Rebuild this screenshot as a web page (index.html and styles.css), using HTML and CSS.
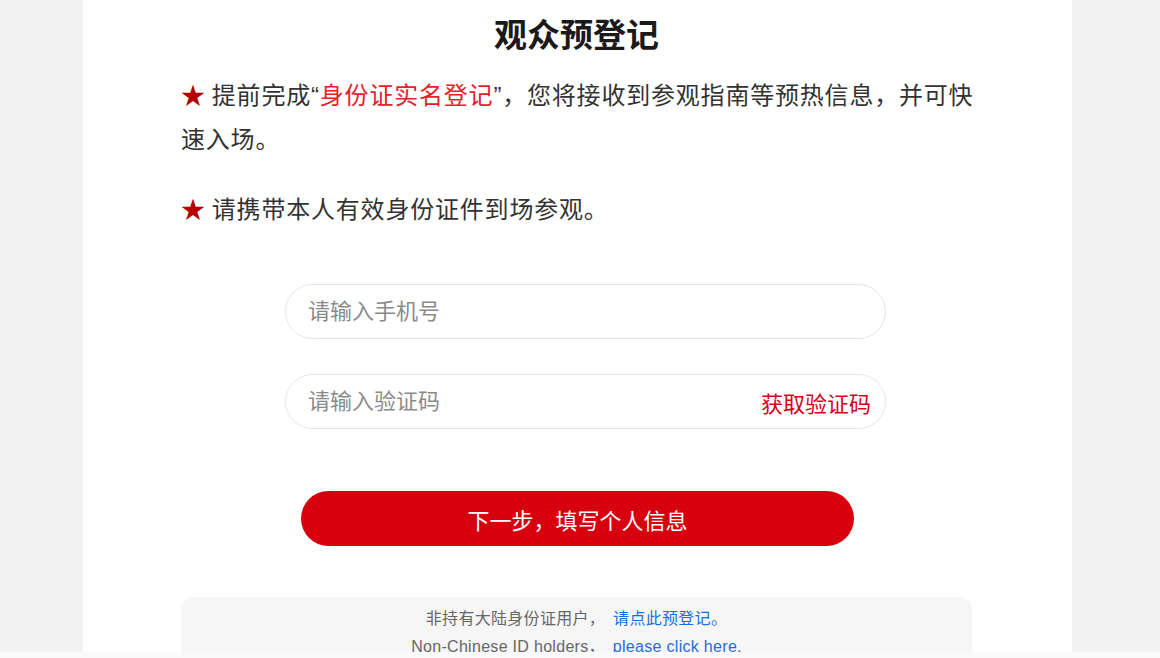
FILE: index.html
```html
<!DOCTYPE html>
<html>
<head>
    <title> 观众预登记 </title>
    <link rel="stylesheet" href="styles.css">
</head>
<body>
    <div class="page">
        <h2>观众预登记</h2>
        <p class="tip"><span class="star">★</span>提前完成“<span class="hl">身份证实名登记</span>”，您将接收到参观指南等预热信息，并可快速入场。</p>
        <p class="tip"><span class="star">★</span>请携带本人有效身份证件到场参观。</p>

        <form class="form">
            <div class="field">
                <input type="text" placeholder="请输入手机号">
            </div>
            <div class="field">
                <input type="text" placeholder="请输入验证码">
                <span class="get-code">获取验证码</span>
            </div>
            <button type="button" class="next">下一步，填写个人信息</button>
        </form>

        <div class="notice">
            <div>非持有大陆身份证用户，<a href="#">请点此预登记。</a></div>
            <div>Non-Chinese ID holders，<a href="#">please click here.</a></div>
        </div>
    </div>
    <div class="bottom-bar"></div>
</body>
</html>
```

FILE: styles.css
```css
body {
    font-family: "Liberation Sans", "Noto Sans CJK SC", sans-serif;
    background-color: #f2f2f2;
    margin: 0;
    height: 658px;
    overflow: hidden;
    display: flex;
    flex-direction: column;
}

.page {
    width: 989px;
    height: 652px;
    margin-left: 83px;
    background-color: #fff;
    padding: 0 100px 0 98px;
    box-sizing: border-box;
    overflow: hidden;
}

h2 {
    margin: 14px 0 16px;
    text-align: center;
    font-size: 33px;
    line-height: 44px;
    font-weight: bold;
    color: #1a1a1a;
}

.tip {
    margin: 0 -10px 26px 0;
    font-size: 24px;
    line-height: 44px;
    letter-spacing: 0.8px;
    color: #333;
}

.star {
    color: #b50000;
    margin-right: 6px;
}

.hl {
    color: #e8202c;
}

.form {
    margin: 52px 0 0 104px;
    width: 601px;
}

.field {
    display: flex;
    align-items: center;
    height: 55px;
    border: 1px solid #e6e6e6;
    border-radius: 28px;
    box-sizing: border-box;
    padding: 0 14px 0 22px;
    margin-bottom: 35px;
}

.field input {
    flex: 1;
    border: none;
    outline: none;
    font-family: inherit;
    font-size: 22px;
    color: #333;
    padding: 0;
    background: transparent;
}

.field input::placeholder {
    color: #8a8a8a;
}

.get-code {
    color: #d7001a;
    font-size: 22px;
    cursor: pointer;
}

.next {
    display: block;
    width: 553px;
    height: 55px;
    margin: 62px 0 0 16px;
    border: none;
    border-radius: 28px;
    background-color: #d7000f;
    color: #fff;
    font-family: inherit;
    font-size: 22px;
    cursor: pointer;
}

.notice {
    margin-top: 51px;
    background-color: #f6f6f6;
    border-radius: 12px 12px 0 0;
    padding: 8px 0 10px;
    text-align: center;
    font-size: 16px;
    line-height: 28px;
    letter-spacing: 0.3px;
    color: #666;
}

.notice a {
    color: #1a6fe0;
    text-decoration: none;
    margin-left: 8px;
}

.bottom-bar {
    height: 6px;
    background-color: #fafafa;
}
```
